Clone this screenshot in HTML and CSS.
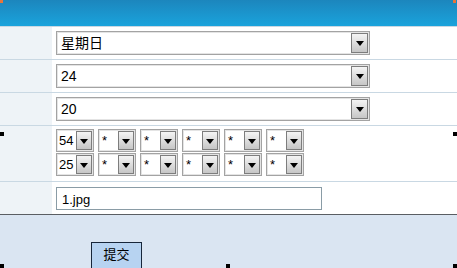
FILE: index.html
```html
<!DOCTYPE html>
<html lang="zh-CN">
<head>
    <meta charset="UTF-8">
    <title>设置</title>
    <link rel="stylesheet" href="styles.css">
</head>
<body>
    <div class="page">
        <div class="header"></div>

        <div class="row r1">
            <div class="label"></div>
            <div class="field">
                <div class="dd wide"><span class="val">星期日</span><span class="btn"></span></div>
            </div>
        </div>
        <div class="row r1">
            <div class="label"></div>
            <div class="field">
                <div class="dd wide"><span class="val">24</span><span class="btn"></span></div>
            </div>
        </div>
        <div class="row r1">
            <div class="label"></div>
            <div class="field">
                <div class="dd wide"><span class="val">20</span><span class="btn"></span></div>
            </div>
        </div>
        <div class="row r4">
            <div class="label"></div>
            <div class="field">
                <div class="grid">
                    <div class="dd small"><span class="val">54</span><span class="btn"></span></div>
                    <div class="dd small"><span class="val star">*</span><span class="btn"></span></div>
                    <div class="dd small"><span class="val star">*</span><span class="btn"></span></div>
                    <div class="dd small"><span class="val star">*</span><span class="btn"></span></div>
                    <div class="dd small"><span class="val star">*</span><span class="btn"></span></div>
                    <div class="dd small"><span class="val star">*</span><span class="btn"></span></div>
                    <div class="dd small"><span class="val">25</span><span class="btn"></span></div>
                    <div class="dd small"><span class="val star">*</span><span class="btn"></span></div>
                    <div class="dd small"><span class="val star">*</span><span class="btn"></span></div>
                    <div class="dd small"><span class="val star">*</span><span class="btn"></span></div>
                    <div class="dd small"><span class="val star">*</span><span class="btn"></span></div>
                    <div class="dd small"><span class="val star">*</span><span class="btn"></span></div>
                </div>
            </div>
        </div>
        <div class="row r5">
            <div class="label"></div>
            <div class="field">
                <div class="text-input">1.jpg</div>
            </div>
        </div>

        <div class="footer">
            <button class="submit" type="button">提交</button>
        </div>

        <!-- design-mode handles -->
        <span class="mark orange tl"></span>
        <span class="mark orange tr"></span>
        <span class="mark h-ml"></span>
        <span class="mark h-mr"></span>
        <span class="mark h-bl"></span>
        <span class="mark h-bm"></span>
        <span class="mark h-br"></span>
    </div>
</body>
</html>
```

FILE: styles.css
```css
body {
    margin: 0;
    font-family: "Liberation Sans", "Noto Sans CJK SC", sans-serif;
    font-size: 12px;
    color: #000;
    background: #fff;
}
.page {
    position: relative;
    width: 457px;
    height: 268px;
    overflow: hidden;
}
.header {
    height: 26px;
    background: linear-gradient(#1c86bd, #1aa3dc);
}
.row {
    display: flex;
    border-top: 1px solid #c9d8e3;
}
.r1 {
    height: 32px;
}
.r4 {
    height: 55px;
}
.r5 {
    height: 32px;
}
.label {
    width: 52px;
    background: #eef3f7;
}
.field {
    flex-grow: 1;
    display: flex;
    align-items: center;
    padding-left: 4px;
}
.r4 .field {
    align-items: flex-start;
    padding-top: 3px;
}
.dd {
    display: flex;
    align-items: center;
    justify-content: space-between;
    box-sizing: border-box;
    border: 1px solid #a3a3a3;
    box-shadow: inset 0 0 0 1px #e4e4e4;
    background: #fff;
    padding: 1px 1px 1px 4px;
}
.dd.wide {
    width: 314px;
    height: 24px;
    font-size: 14px;
}
.dd.small {
    width: 38px;
    height: 23px;
    font-size: 13px;
    padding-left: 2px;
}
.grid {
    display: grid;
    grid-template-columns: repeat(6, 38px);
    column-gap: 4px;
    row-gap: 1px;
}
.btn {
    position: relative;
    box-sizing: border-box;
    width: 17px;
    height: 20px;
    border: 1px solid #7d7d7d;
    background: linear-gradient(#f4f4f4, #c6c6c6);
}
.small .btn {
    width: 16px;
    height: 19px;
}
.btn::after {
    content: "";
    position: absolute;
    left: 50%;
    top: 7px;
    margin-left: -4px;
    border-left: 4px solid transparent;
    border-right: 4px solid transparent;
    border-top: 5px solid #000;
}
.val {
    line-height: 1;
}
.star {
    align-self: flex-start;
    padding: 3px 0 0 1px;
}
.text-input {
    box-sizing: border-box;
    width: 266px;
    height: 23px;
    border: 1px solid #8a9ca6;
    padding: 4px 5px;
    font-size: 13px;
}
.footer {
    border-top: 1px solid #5a5e63;
    height: 60px;
    background: #dae5f2;
    padding-left: 91px;
    padding-top: 27px;
    box-sizing: border-box;
}
.submit {
    width: 51px;
    height: 28px;
    border: 1px solid #17263a;
    background: #b7d3f1;
    font-family: "Noto Sans CJK SC", sans-serif;
    font-size: 13px;
    padding: 0 0 6px;
    color: #000;
}
.mark {
    position: absolute;
    width: 4px;
    height: 4px;
    background: #000;
}
.orange {
    background: #e8743a;
    width: 3px;
    height: 3px;
}
.tl { left: 0; top: 0; }
.tr { right: 1px; top: 0; }
.h-ml { left: 0; top: 132px; }
.h-mr { right: 0; top: 132px; }
.h-bl { left: 0; top: 264px; }
.h-bm { left: 226px; top: 264px; }
.h-br { right: 0; top: 264px; }
```
